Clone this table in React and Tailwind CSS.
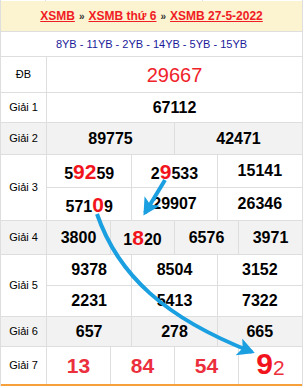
import React from "react";

const B = "border-[#dedede]";

function Num({ children, className = "" }) {
  return (
    <div className={`flex items-center justify-center border-l ${B} font-bold text-[16px] text-black ${className}`}>
      <span className="leading-none">{children}</span>
    </div>
  );
}

function Hi({ children }) {
  return <span className="text-[21px] text-[#f2141c]">{children}</span>;
}

function Row({ label, h, bg = "bg-white", children }) {
  return (
    <div className={`flex border-b ${B} ${bg} ${h}`}>
      <div className={`w-[45px] shrink-0 flex items-center justify-center text-[11px] text-black`}>
        {label}
      </div>
      <div className="flex-1 flex flex-col">{children}</div>
    </div>
  );
}

export default function App() {
  return (
    <div className="relative w-[306px] h-[388px] bg-white overflow-hidden" style={{ fontFamily: '"Liberation Sans", Arial, sans-serif' }}>
      <div className={`w-[303px] border-l border-r ${B}`}>
        <div className="h-px flex">
          <div className={`w-[45px] border-r ${B}`}></div>
          <div className={`w-[157px] border-r ${B}`}></div>
        </div>
        <div className={`h-[31px] bg-[#fcf3d0] border-b ${B} flex items-center justify-center text-[12px] font-bold gap-[4px]`}>
          <span className="text-[#f01c24] underline decoration-[#f01c24]">XSMB</span>
          <span className="text-[#333] text-[10px]">»</span>
          <span className="text-[#f01c24] underline decoration-[#f01c24]">XSMB thứ 6</span>
          <span className="text-[#333] text-[10px]">»</span>
          <span className="text-[#f01c24] underline decoration-[#f01c24]">XSMB 27-5-2022</span>
        </div>
        <div className={`h-[25px] border-b ${B} flex items-center justify-center text-[11px] text-[#1a1a9a]`}>
          8YB - 11YB - 2YB - 14YB - 5YB - 15YB
        </div>

        <Row label="ĐB" h="h-[36px]">
          <div className={`flex-1 flex items-center justify-center border-l ${B} text-[20px] text-[#f0232b]`}>
            29667
          </div>
        </Row>

        <Row label="Giải 1" h="h-[30px]">
          <div className="flex-1 grid grid-cols-1">
            <Num>67112</Num>
          </div>
        </Row>

        <Row label="Giải 2" h="h-[32px]" bg="bg-[#f2f2f2]">
          <div className="flex-1 grid grid-cols-2">
            <Num>89775</Num>
            <Num>42471</Num>
          </div>
        </Row>

        <Row label="Giải 3" h="h-[66px]">
          <div className={`flex-1 grid grid-cols-3 border-b ${B}`}>
            <Num>5<Hi>92</Hi>59</Num>
            <Num>2<Hi>9</Hi>533</Num>
            <Num>15141</Num>
          </div>
          <div className="flex-1 grid grid-cols-3">
            <Num>571<Hi>0</Hi>9</Num>
            <Num>29907</Num>
            <Num>26346</Num>
          </div>
        </Row>

        <Row label="Giải 4" h="h-[34px]" bg="bg-[#f2f2f2]">
          <div className="flex-1 grid grid-cols-4">
            <Num>3800</Num>
            <Num>1<Hi>8</Hi>20</Num>
            <Num>6576</Num>
            <Num>3971</Num>
          </div>
        </Row>

        <Row label="Giải 5" h="h-[62px]">
          <div className={`flex-1 grid grid-cols-3 border-b ${B}`}>
            <Num>9378</Num>
            <Num>8504</Num>
            <Num>3152</Num>
          </div>
          <div className="flex-1 grid grid-cols-3">
            <Num>2231</Num>
            <Num>5413</Num>
            <Num>7322</Num>
          </div>
        </Row>

        <Row label="Giải 6" h="h-[30px]" bg="bg-[#f2f2f2]">
          <div className="flex-1 grid grid-cols-3">
            <Num>657</Num>
            <Num>278</Num>
            <Num>665</Num>
          </div>
        </Row>

        <div className="flex h-[39px] bg-white border-b-2 border-b-[#f5a03a]">
          <div className="w-[45px] shrink-0 flex items-center justify-center text-[11px] text-black">Giải 7</div>
          <div className="flex-1 grid grid-cols-4">
            <Num className="!font-bold !text-[21px] !text-[#ec2f3c]">13</Num>
            <Num className="!font-bold !text-[21px] !text-[#ec2f3c]">84</Num>
            <Num className="!font-bold !text-[21px] !text-[#ec2f3c]">54</Num>
            <div className={`flex items-end justify-center border-l ${B} pb-[5px]`}>
              <span className="leading-none text-[30px] font-bold text-[#f2141c]">9</span>
              <span className="leading-none text-[21px] text-[#ec2f3c] mb-[1px]">2</span>
            </div>
          </div>
        </div>
      </div>

      <svg className="absolute inset-0 pointer-events-none" width="306" height="388" viewBox="0 0 306 388">
        <defs>
          <marker id="ah" markerUnits="userSpaceOnUse" markerWidth="20" markerHeight="20" refX="14" refY="9" orient="auto">
            <path d="M0 0 L17 9 L0 18 L4 9 Z" fill="#1a9fe0" />
          </marker>
        </defs>
        <path d="M165 180 L145 213" stroke="#1a9fe0" strokeWidth="4" fill="none" markerEnd="url(#ah)" />
        <path d="M97 214 C118 275, 165 318, 252 352" stroke="#1a9fe0" strokeWidth="4" fill="none" markerEnd="url(#ah)" />
      </svg>
    </div>
  );
}
